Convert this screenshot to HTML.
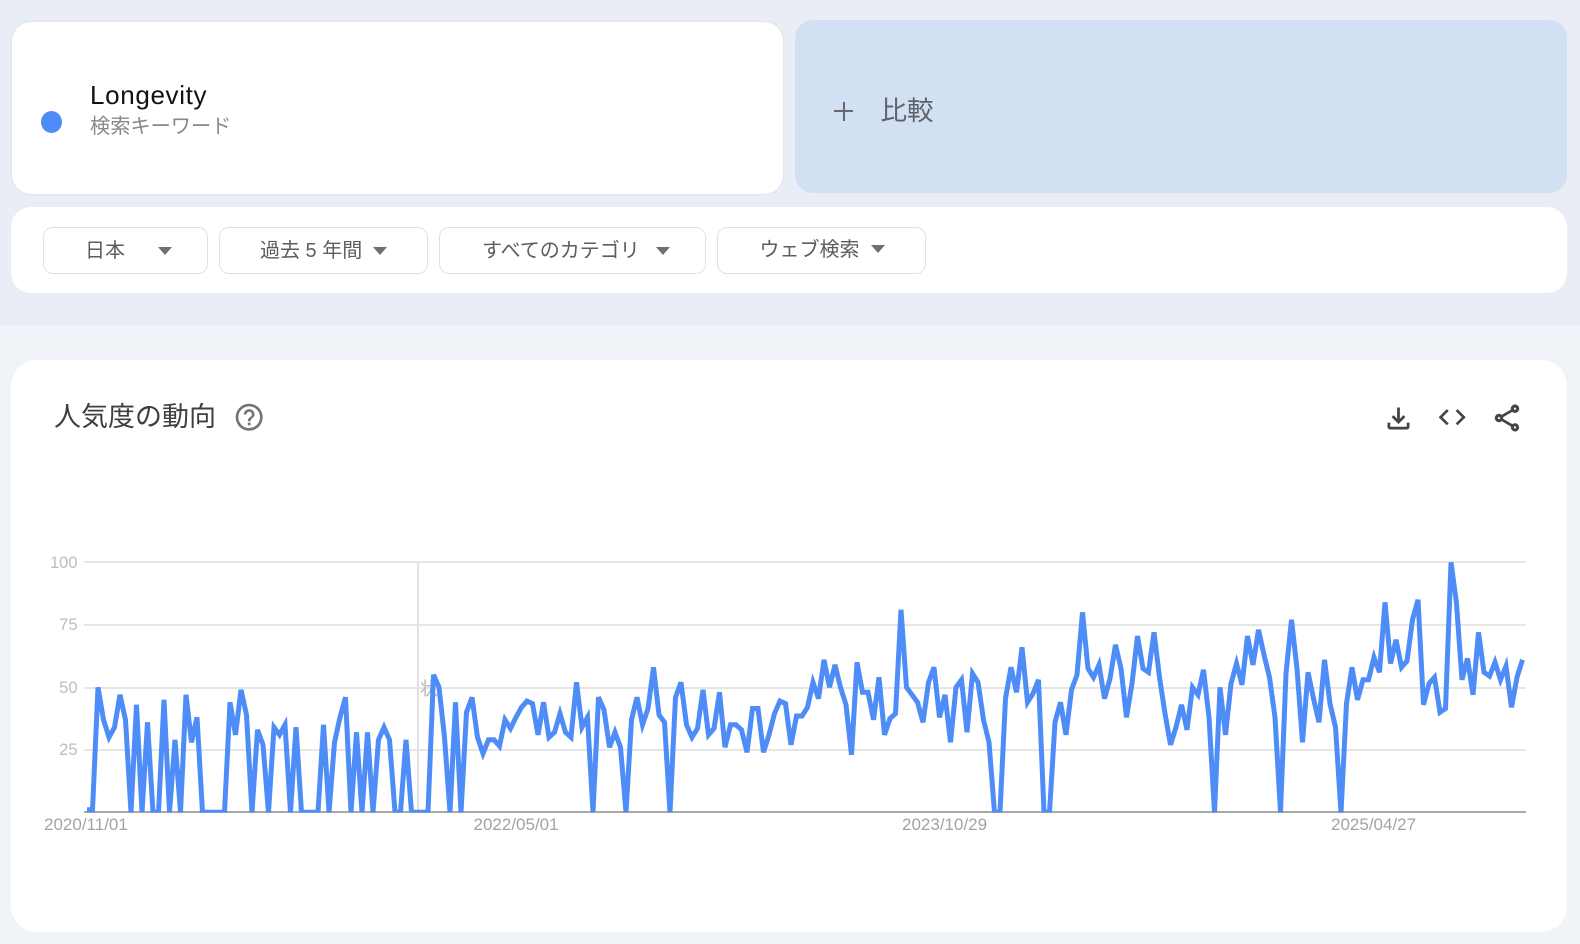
<!DOCTYPE html>
<html lang="ja">
<head>
<meta charset="utf-8">
<title>Longevity</title>
<style>
html,body{margin:0;padding:0;width:1580px;height:944px;overflow:hidden;background:#f0f4f9;font-family:"Liberation Sans","Noto Sans CJK JP",sans-serif}
#w{position:absolute;left:0;top:0;width:1580px;height:944px;filter:blur(.35px)}
.a{position:absolute;white-space:nowrap}
.top{left:0;top:0;width:1580px;height:325px;background:#e8edf6}
.card{background:#fff;box-sizing:border-box}
.btn{box-sizing:border-box;background:#fff;border:1px solid #dfe1e5;border-radius:10px;top:227px;height:47px}
.ft{font-size:20px;line-height:28px;color:#5a5d61;top:237px}
.tri{width:0;height:0;border-left:7.5px solid transparent;border-right:7.5px solid transparent;border-top:8px solid #707070;top:247px}
.yl{font-size:16.5px;line-height:20px;color:#bdbdbd;left:30px;width:47.5px;text-align:right}
.xl{font-size:17px;line-height:20px;color:#a3a3a3;top:815px}
svg{position:absolute;display:block}
</style>
</head>
<body>
<div id="w">
<div class="a top"></div>

<div class="a card" style="left:11px;top:21px;width:773px;height:174px;border-radius:20px;border:1px solid #e3e5e9"></div>
<div class="a" style="left:40.5px;top:111px;width:21px;height:22px;border-radius:50%;background:#4e8df7"></div>
<div class="a" style="left:90px;top:78px;font-size:26px;line-height:34px;letter-spacing:.65px;color:#111">Longevity</div>
<div class="a" style="left:90px;top:113px;font-size:20.2px;line-height:28px;color:#85888c">検索キーワード</div>

<div class="a" style="left:795px;top:20px;width:772px;height:173px;border-radius:18px;background:#d2e0f3"></div>
<div class="a" style="left:834px;top:110px;width:19px;height:2px;background:#666a6e"></div>
<div class="a" style="left:842.5px;top:101.5px;width:2px;height:19px;background:#666a6e"></div>
<div class="a" style="left:880.5px;top:93px;font-size:26.5px;line-height:36px;color:#5f6368">比較</div>

<div class="a card" style="left:11px;top:207px;width:1556px;height:86px;border-radius:20px"></div>
<div class="a btn" style="left:43px;width:165px"></div>
<div class="a ft" style="left:85px">日本</div>
<div class="a tri" style="left:157.5px"></div>
<div class="a btn" style="left:219px;width:209px"></div>
<div class="a ft" style="left:260px">過去 5 年間</div>
<div class="a tri" style="left:372.5px"></div>
<div class="a btn" style="left:439px;width:267px"></div>
<div class="a ft" style="left:482px">すべてのカテゴリ</div>
<div class="a tri" style="left:656px"></div>
<div class="a btn" style="left:717px;width:209px"></div>
<div class="a ft" style="left:759.5px;top:235.5px">ウェブ検索</div>
<div class="a tri" style="left:871px;top:245px"></div>

<div class="a card" style="left:11px;top:360px;width:1556px;height:572px;border-radius:26px"></div>
<div class="a" style="left:54px;top:399px;font-size:27px;line-height:36px;color:#3c4043">人気度の動向</div>

<svg style="left:233px;top:400.8px" width="32.4" height="32.4" viewBox="0 0 24 24" fill="#757575"><path d="M11 18h2v-2h-2v2zm1-16C6.48 2 2 6.48 2 12s4.48 10 10 10 10-4.48 10-10S17.52 2 12 2zm0 18c-4.41 0-8-3.59-8-8s3.59-8 8-8 8 3.59 8 8-3.59 8-8 8zm0-14c-2.21 0-4 1.79-4 4h2c0-1.1.9-2 2-2s2 .9 2 2c0 2-3 1.75-3 5h2c0-2.25 3-2.5 3-5 0-2.21-1.79-4-4-4z"/></svg>
<svg style="left:1382px;top:402px" width="33" height="33" viewBox="0 0 24 24" fill="#444"><path d="M18 15v3H6v-3H4v3c0 1.1.9 2 2 2h12c1.1 0 2-.9 2-2v-3h-2zm-1-4l-1.41-1.41L13 12.17V4h-2v8.17L8.41 9.59 7 11l5 5 5-5z"/></svg>
<svg style="left:1436.3px;top:400.8px" width="32.4" height="32.4" viewBox="0 0 24 24" fill="#444"><path d="M9.4 16.6L4.8 12l4.6-4.6L8 6l-6 6 6 6 1.4-1.4zm5.2 0l4.6-4.6-4.6-4.6L16 6l6 6-6 6-1.4-1.4z"/></svg>
<svg style="left:1491px;top:401.5px" width="32" height="32" viewBox="0 0 24 24" fill="#444" stroke="#444" stroke-width=".35"><path d="M18 16.08c-.76 0-1.44.3-1.96.77L8.91 12.7c.05-.23.09-.46.09-.7s-.04-.47-.09-.7l7.05-4.11c.54.5 1.25.81 2.04.81 1.66 0 3-1.34 3-3s-1.34-3-3-3-3 1.34-3 3c0 .24.04.47.09.7L8.04 9.81C7.5 9.31 6.79 9 6 9c-1.66 0-3 1.34-3 3s1.34 3 3 3c.79 0 1.5-.31 2.04-.81l7.12 4.16c-.05.21-.08.43-.08.65 0 1.61 1.31 2.92 2.92 2.92 1.61 0 2.92-1.31 2.92-2.92s-1.31-2.92-2.92-2.92zM18 4c.55 0 1 .45 1 1s-.45 1-1 1-1-.45-1-1 .45-1 1-1zM6 13c-.55 0-1-.45-1-1s.45-1 1-1 1 .45 1 1-.45 1-1 1zm12 7.02c-.55 0-1-.45-1-1s.45-1 1-1 1 .45 1 1-.45 1-1 1z"/></svg>

<div class="a yl" style="top:552.5px">100</div>
<div class="a yl" style="top:615px">75</div>
<div class="a yl" style="top:677.5px">50</div>
<div class="a yl" style="top:739.5px">25</div>

<div class="a" style="left:84px;top:561px;width:1442px;height:2px;background:#e6e6e6"></div>
<div class="a" style="left:84px;top:624px;width:1442px;height:2px;background:#e6e6e6"></div>
<div class="a" style="left:84px;top:687px;width:1442px;height:2px;background:#e6e6e6"></div>
<div class="a" style="left:84px;top:749px;width:1442px;height:2px;background:#e6e6e6"></div>
<div class="a" style="left:417px;top:562px;width:2px;height:250px;background:#e2e2e2"></div>
<div class="a" style="left:420px;top:678px;font-size:18px;line-height:22px;color:#b5b5b5">状</div>

<div class="a" style="left:84px;top:811px;width:1442px;height:2px;background:#a8a8a8"></div>

<svg style="left:0;top:0" width="1580" height="944">
<defs><clipPath id="c"><rect x="84" y="562" width="1442" height="250.5"/></clipPath></defs>
<g clip-path="url(#c)">
<polyline transform="translate(87 812.3) scale(5.5 -2.5)" vector-effect="non-scaling-stroke" fill="none" stroke="#4e8df7" stroke-width="5" stroke-linejoin="miter" points="0,1 1,1 2,50 3,37 4,30 5,34 6,47 7,37 8,0 9,43 10,0 11,36 12,0 13,0 14,45 15,0 16,29 17,0 18,47 19,28 20,38 21,0 22,0 23,0 24,0 25,0 26,44 27,31 28,49 29,39 30,0 31,33 32,27 33,0 34,34 35,31 36,35 37,0 38,34 39,0 40,0 41,0 42,0 43,35 44,0 45,28 46,38 47,46 48,0 49,32 50,0 51,32 52,0 53,29 54,34 55,29 56,0 57,0 58,29 59,0 60,0 61,0 62,0 63,55 64,50 65,30 66,0 67,44 68,0 69,40 70,46 71,30 72,23.5 73,29 74,29 75,26.5 76,37 77,33.5 78,38 79,42 80,44.5 81,43.5 82,31 83,44 84,30 85,32 86,39.5 87,32 88,30 89,52 90,34 91,38 92,0 93,46 94,41 95,26 96,32 97,26 98,0 99,37 100,46 101,35 102,41.5 103,58 104,39 105,36 106,0 107,46 108,52 109,35 110,30 111,33.5 112,49 113,31 114,33.5 115,48 116,26 117,35 118,35 119,33 120,24 121,41.5 122,41.5 123,24 124,31 125,39.5 126,44.5 127,43.5 128,27 129,38.5 130,38.5 131,42 132,52 133,45.5 134,61 135,50 136,59 137,50 138,43 139,23 140,60 141,48 142,48 143,37 144,54 145,31 146,37.5 147,39.5 148,81 149,50 150,47 151,44 152,36 153,52 154,58 155,38 156,47 157,28 158,50 159,53 160,32 161,55.5 162,52 163,37 164,28 165,0 166,0 167,45.5 168,58 169,48 170,66 171,44 172,47.5 173,53 174,0 175,0 176,36 177,44 178,31 179,49 180,55 181,80 182,57.5 183,54 184,59 185,45.5 186,53.5 187,67 188,57.5 189,38 190,51.5 191,70.5 192,57.5 193,56 194,72 195,54 196,39.5 197,27 198,34 199,43 200,33 201,50 202,47 203,57 204,38 205,0 206,50 207,31 208,51.5 209,59.5 210,51 211,70.5 212,59 213,73 214,63 215,54 216,38 217,0 218,55.5 219,77 220,57.5 221,28 222,56 223,45.5 224,36 225,61 226,43.5 227,34 228,0 229,43.5 230,58 231,45 232,53 233,53 234,62 235,56 236,84 237,59.5 238,69 239,58 240,60.5 241,77 242,85 243,43 244,51.5 245,54 246,40 247,41.5 248,100 249,83.5 250,53 251,61.5 252,47 253,72 254,56 255,54.5 256,60 257,53 258,58.5 259,42 260,54 261,61"/>
</g>
</svg>

<div class="a xl" style="left:44px">2020/11/01</div>
<div class="a xl" style="left:473.5px">2022/05/01</div>
<div class="a xl" style="left:902px">2023/10/29</div>
<div class="a xl" style="left:1331px">2025/04/27</div>
</div>
</body>
</html>
